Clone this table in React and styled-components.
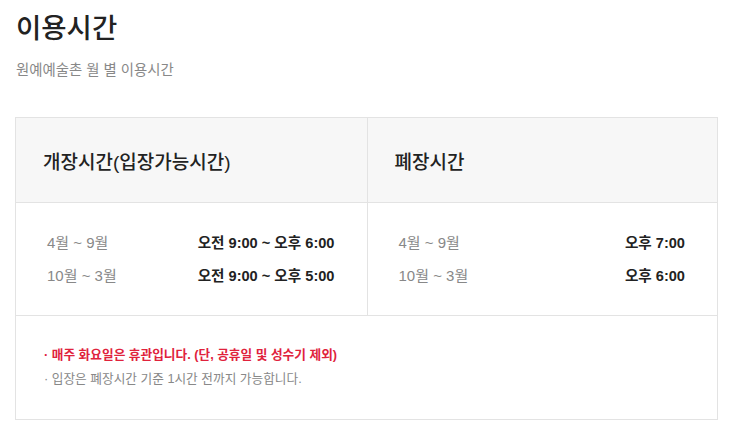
import React from 'react';
import styled, { createGlobalStyle } from 'styled-components';

const GlobalStyle = createGlobalStyle`
    body {
        margin: 0;
        background: #fff;
        font-family: "Liberation Sans", "Noto Sans CJK KR", sans-serif;
        color: #222;
    }
`

const Page = styled.div`
    padding: 9px 22px 0 15px;
`

const Title = styled.h1`
    margin: 0 0 0 1px;
    font-size: 27.5px;
    font-weight: 500;
    line-height: 40px;
    color: #222;
`

const Sub = styled.p`
    margin: 11px 0 0 1px;
    font-size: 14.4px;
    line-height: 20px;
    color: #888;
`

const Table = styled.div`
    margin-top: 37px;
    display: grid;
    grid-template-columns: 1fr 1fr;
    border: 1px solid #e3e3e3;
`

const Head = styled.div`
    height: 84px;
    display: flex;
    align-items: center;
    padding-left: 27px;
    background: #f7f7f7;
    border-bottom: 1px solid #e3e3e3;
    border-left: ${p => (p.$first ? 'none' : '1px solid #e3e3e3')};
    font-size: 19px;
    font-weight: 500;
    color: #222;
`

const Body = styled.div`
    display: flex;
    flex-direction: column;
    gap: 13px;
    padding: 30px 32px 29px 31px;
    border-left: ${p => (p.$first ? 'none' : '1px solid #e3e3e3')};
    border-bottom: 1px solid #e3e3e3;
`

const Row = styled.div`
    display: flex;
    justify-content: space-between;
    align-items: center;
    line-height: 20px;
`

const Period = styled.span`
    font-size: 15px;
    color: #888;
`

const Time = styled.span`
    font-size: 14.6px;
    font-weight: 700;
    color: #222;
`

const Notes = styled.div`
    grid-column: 1 / span 2;
    padding: 29px 28px 30px;
    display: flex;
    flex-direction: column;
    gap: 4px;
`

const Note = styled.p`
    margin: 0;
    font-size: 12.7px;
    line-height: 20px;
    color: ${p => (p.$red ? '#e0223c' : '#888')};
    font-weight: ${p => (p.$red ? 700 : 400)};
`

const open = [
    ['4월 ~ 9월', '오전 9:00 ~ 오후 6:00'],
    ['10월 ~ 3월', '오전 9:00 ~ 오후 5:00'],
];

const close = [
    ['4월 ~ 9월', '오후 7:00'],
    ['10월 ~ 3월', '오후 6:00'],
];

const App = () => {
    return (
        <Page>
            <GlobalStyle />
            <Title>이용시간</Title>
            <Sub>원예예술촌 월 별 이용시간</Sub>
            <Table>
                <Head $first>개장시간(입장가능시간)</Head>
                <Head>폐장시간</Head>
                <Body $first>
                    {open.map(([p, t]) => (
                        <Row key={p}>
                            <Period>{p}</Period>
                            <Time>{t}</Time>
                        </Row>
                    ))}
                </Body>
                <Body>
                    {close.map(([p, t]) => (
                        <Row key={p}>
                            <Period>{p}</Period>
                            <Time>{t}</Time>
                        </Row>
                    ))}
                </Body>
                <Notes>
                    <Note $red>· 매주 화요일은 휴관입니다. (단, 공휴일 및 성수기 제외)</Note>
                    <Note>· 입장은 폐장시간 기준 1시간 전까지 가능합니다.</Note>
                </Notes>
            </Table>
        </Page>
    );
};

export default App;
